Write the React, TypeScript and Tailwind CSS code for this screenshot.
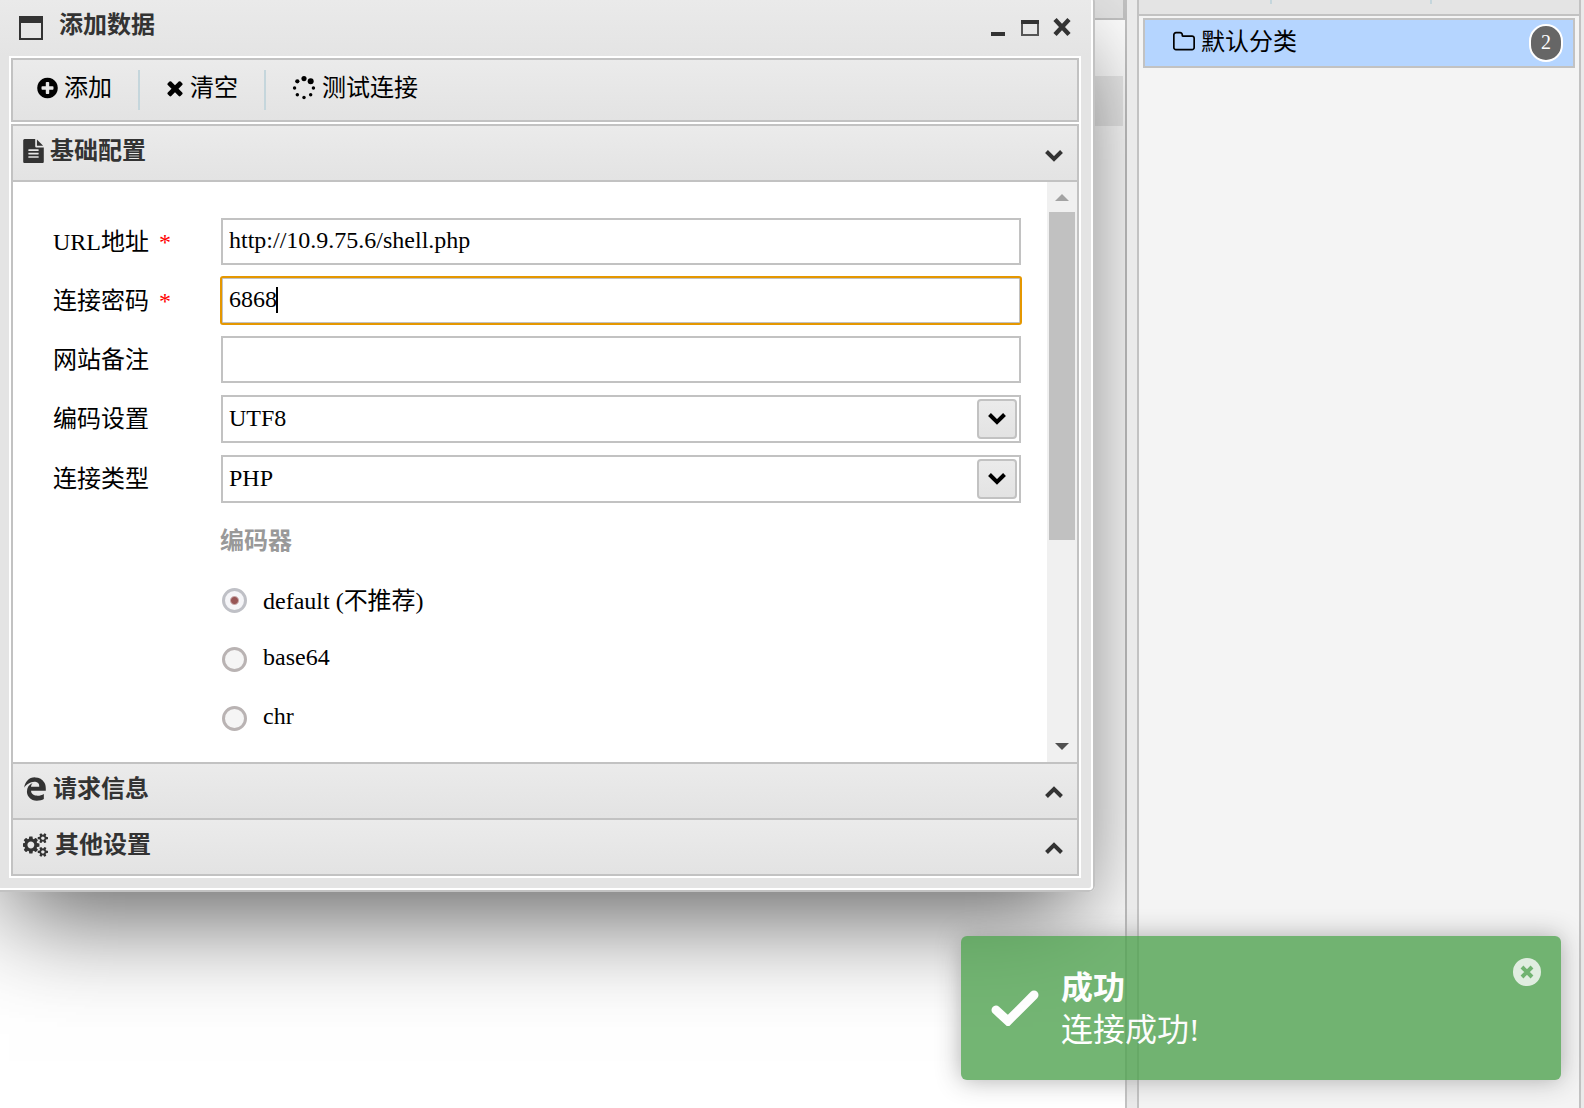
import React, { useState } from "react";
import { FaEdgeLegacy } from "react-icons/fa";

type IconProps = { className?: string };

function PlusCircleIcon({ className }: IconProps) {
  return (
    <svg viewBox="128 0 1536 1792" className={className} fill="currentColor" aria-hidden="true">
      <path d="M1344 960v-128q0-26-19-45t-45-19h-256v-256q0-26-19-45t-45-19h-128q-26 0-45 19t-19 45v256h-256q-26 0-45 19t-19 45v128q0 26 19 45t45 19h256v256q0 26 19 45t45 19h128q26 0 45-19t19-45v-256h256q26 0 45-19t19-45zm320-64q0 209-103 385.5t-279.5 279.5-385.5 103-385.5-103-279.5-279.5-103-385.5 103-385.5 279.5-279.5 385.5-103 385.5 103 279.5 279.5 103 385.5z" />
    </svg>
  );
}

function TimesIcon({ className }: IconProps) {
  return (
    <svg viewBox="192 0 1408 1792" className={className} fill="currentColor" aria-hidden="true">
      <path d="M1490 1322q0 40-28 68l-136 136q-28 28-68 28t-68-28l-294-294-294 294q-28 28-68 28t-68-28l-136-136q-28-28-28-68t28-68l294-294-294-294q-28-28-28-68t28-68l136-136q28-28 68-28t68 28l294 294 294-294q28-28 68-28t68 28l136 136q28 28 28 68t-28 68l-294 294 294 294q28 28 28 68z" />
    </svg>
  );
}

function SpinnerIcon({ className }: IconProps) {
  return (
    <svg viewBox="0 0 1792 1792" className={className} fill="currentColor" aria-hidden="true">
      <circle cx="398" cy="1394" r="128" />
      <circle cx="896" cy="1600" r="128" />
      <circle cx="192" cy="896" r="128" />
      <circle cx="1394" cy="1394" r="128" />
      <circle cx="398" cy="398" r="160" />
      <circle cx="1600" cy="896" r="128" />
      <circle cx="896" cy="192" r="192" />
      <circle cx="1394" cy="398" r="224" />
    </svg>
  );
}

function FileTextIcon({ className }: IconProps) {
  return (
    <svg viewBox="128 0 1536 1792" className={className} fill="currentColor" aria-hidden="true">
      <path d="M1596 476q14 14 28 36h-472v-472q22 14 36 28zm-476 164h544v1056q0 40-28 68t-68 28h-1344q-40 0-68-28t-28-68v-1600q0-40 28-68t68-28h800v544q0 40 28 68t68 28zm160 736v-64q0-14-9-23t-23-9h-704q-14 0-23 9t-9 23v64q0 14 9 23t23 9h704q14 0 23-9t9-23zm0-256v-64q0-14-9-23t-23-9h-704q-14 0-23 9t-9 23v64q0 14 9 23t23 9h704q14 0 23-9t9-23zm0-256v-64q0-14-9-23t-23-9h-704q-14 0-23 9t-9 23v64q0 14 9 23t23 9h704q14 0 23-9t9-23z" />
    </svg>
  );
}

function CogsIcon({ className }: IconProps) {
  return (
    <svg viewBox="0 0 1920 1792" className={className} fill="currentColor" aria-hidden="true">
      <path d="M832 896q0-106-75-181t-181-75-181 75-75 181 75 181 181 75 181-75 75-181zm768 512q0-52-38-90t-90-38-90 38-38 90q0 53 37.5 90.5t90.5 37.5 90.5-37.5 37.5-90.5zm0-1024q0-52-38-90t-90-38-90 38-38 90q0 53 37.5 90.5t90.5 37.5 90.5-37.5 37.5-90.5zm-384 421v185q0 10-7 19.5t-16 10.5l-155 24q-11 35-32 76 34 48 90 115 7 11 7 20 0 12-7 19-23 30-82.5 89.5t-78.5 59.5q-11 0-21-7l-115-90q-37 19-77 31-11 108-23 155-7 24-30 24h-186q-11 0-20-7.5t-10-17.5l-23-153q-34-10-75-31l-118 89q-7 7-20 7-11 0-21-8-144-133-144-160 0-9 7-19 10-14 41-53t47-61q-23-44-35-82l-152-24q-10-1-17-9.5t-7-19.5v-185q0-10 7-19.5t16-10.5l155-24q11-35 32-76-34-48-90-115-7-11-7-20 0-12 7-20 22-30 82-89t79-59q11 0 21 7l115 90q34-18 77-32 11-108 23-154 7-24 30-24h186q11 0 20 7.5t10 17.5l23 153q34 10 75 31l118-89q8-7 20-7 11 0 21 8 144 133 144 160 0 9-7 19-12 16-42 54t-45 60q23 48 34 82l152 23q10 2 17 10.5t7 19.5zm640 533v140q0 16-149 31-12 27-30 52 51 113 51 138 0 4-4 7-122 71-124 71-8 0-46-47t-52-68q-20 2-30 2t-30-2q-14 21-52 68t-46 47q-2 0-124-71-4-3-4-7 0-25 51-138-18-25-30-52-149-15-149-31v-140q0-16 149-31 13-29 30-52-51-113-51-138 0-4 4-7 4-2 35-20t59-34 30-16q8 0 46 46.5t52 67.5q20-2 30-2t30 2q51-71 92-112l6-2q4 0 124 70 4 3 4 7 0 25-51 138 17 23 30 52 149 15 149 31zm0-1024v140q0 16-149 31-12 27-30 52 51 113 51 138 0 4-4 7-122 71-124 71-8 0-46-47t-52-68q-20 2-30 2t-30-2q-14 21-52 68t-46 47q-2 0-124-71-4-3-4-7 0-25 51-138-18-25-30-52-149-15-149-31v-140q0-16 149-31 13-29 30-52-51-113-51-138 0-4 4-7 4-2 35-20t59-34 30-16q8 0 46 46.5t52 67.5q20-2 30-2t30 2q51-71 92-112l6-2q4 0 124 70 4 3 4 7 0 25-51 138 17 23 30 52 149 15 149 31z" />
    </svg>
  );
}

function FolderIcon({ className }: IconProps) {
  return (
    <svg viewBox="64 0 1664 1792" className={className} fill="currentColor" aria-hidden="true">
      <path d="M1600 1312v-704q0-40-28-68t-68-28h-704q-40 0-68-28t-28-68v-64q0-40-28-68t-68-28h-320q-40 0-68 28t-28 68v960q0 40 28 68t68 28h1216q40 0 68-28t28-68zm128-704v704q0 92-66 158t-158 66h-1216q-92 0-158-66t-66-158v-960q0-92 66-158t158-66h320q92 0 158 66t66 158v32h672q92 0 158 66t66 158z" />
    </svg>
  );
}

function Chevron({ up, className }: { up?: boolean; className?: string }) {
  return (
    <svg viewBox="0 0 18 12" width="18" height="12" fill="none" stroke="currentColor" strokeWidth="4" className={className} aria-hidden="true">
      <path d={up ? "M1.5 10.5 9 3l7.5 7.5" : "M1.5 1.5 9 9l7.5-7.5"} />
    </svg>
  );
}

function ToolbarSeparator() {
  return <span className="mx-0.5 h-10 w-0.5 bg-[#c5d6dc]" />;
}

function ToolButton({ icon, label }: { icon: React.ReactNode; label: string }) {
  return (
    <button type="button" className="flex h-10 items-center gap-1.5 px-6 pb-1 text-black">
      {icon}
      {label}
    </button>
  );
}

function SectionHeader({ icon, label, open }: { icon: React.ReactNode; label: string; open?: boolean }) {
  return (
    <button
      type="button"
      aria-expanded={!!open}
      className="flex h-14 w-full items-center justify-between bg-linear-to-b from-[#ebebeb] to-[#e3e3e3] pr-3.5 pl-2.5 text-[#333] last:h-[54px]"
    >
      <span className="flex items-center gap-1.5 pb-1 font-bold">
        {icon}
        {label}
      </span>
      <Chevron up={!open} className={open ? "mt-1.5" : "mt-0.5"} />
    </button>
  );
}

function Field({ id, label, required, children }: { id: string; label: string; required?: boolean; children: React.ReactNode }) {
  return (
    <div className="flex items-center">
      <label htmlFor={id} className="flex w-[168px] shrink-0 gap-2.5">
        {label}
        {required && <span className="text-[#ff0000]">*</span>}
      </label>
      <div className="relative flex-1">{children}</div>
    </div>
  );
}

function SelectField({ id, value }: { id: string; value: string }) {
  return (
    <>
      <select
        id={id}
        defaultValue={value}
        className="block h-12 w-full appearance-none border-2 border-[#c2c2c2] bg-white px-1.5 pb-0.5 outline-none"
      >
        <option>{value}</option>
      </select>
      <span className="pointer-events-none absolute top-1 right-1 flex size-10 items-center justify-center rounded border-2 border-[#c2c2c2] bg-linear-to-b from-[#ebebeb] to-[#e3e3e3]">
        <Chevron className="text-black" />
      </span>
    </>
  );
}

const inputClass = "block h-[47px] w-full border-2 border-[#c2c2c2] bg-white px-1.5 pb-0.5 outline-none";
const radioClass =
  "size-[25px] shrink-0 appearance-none rounded-full border-3 border-[#b9b3b3] bg-[#f5f5f5] checked:border-[#bfc0c6] checked:bg-[radial-gradient(circle,#985656_0_3px,#f5f5f8_5px)]";

function ConfigForm() {
  const [url, setUrl] = useState("http://10.9.75.6/shell.php");
  const [password, setPassword] = useState("6868");
  return (
    <form className="flex flex-1 flex-col gap-3 pt-9 pr-[26px] pl-10">
      <Field id="url" label="URL地址" required>
        <input id="url" value={url} onChange={(e) => setUrl(e.target.value)} className={inputClass} />
      </Field>
      <Field id="password" label="连接密码" required>
        <input
          id="password"
          value={password}
          onChange={(e) => setPassword(e.target.value)}
          className="block h-[47px] w-full rounded-xs border-2 border-[#c2c2c2] bg-white px-1.5 pb-0.5 outline-2 -outline-offset-1 outline-[#e59700]"
        />
        <span className="absolute top-2.5 left-[55px] h-[26px] w-0.5 bg-black" />
      </Field>
      <Field id="note" label="网站备注">
        <input id="note" className={inputClass} />
      </Field>
      <Field id="charset" label="编码设置">
        <SelectField id="charset" value="UTF8" />
      </Field>
      <Field id="type" label="连接类型">
        <SelectField id="type" value="PHP" />
      </Field>
      <fieldset className="mt-2 ml-[167px]">
        <legend className="font-bold text-[#999]">编码器</legend>
        <div className="mt-3 flex flex-col pl-0.5">
          {["default (不推荐)", "base64", "chr"].map((name, i) => (
            <label key={name} className="flex h-[59px] items-center gap-4 leading-[normal]">
              <input type="radio" name="encoder" defaultChecked={i === 0} className={radioClass} />
              <span className="pb-1">{name}</span>
            </label>
          ))}
        </div>
      </fieldset>
    </form>
  );
}

function ScrollBar() {
  return (
    <div className="flex w-[30px] flex-col items-center justify-between bg-[#f0f0f0] pt-3 pb-3" aria-hidden="true">
      <div className="flex flex-col items-center gap-[11px]">
        <svg width="14" height="7" viewBox="0 0 14 7">
          <path d="M0 7 7 0l7 7z" fill="#a3a3a3" />
        </svg>
        <div className="h-[328px] w-[26px] bg-[#c1c1c1]" />
      </div>
      <svg width="14" height="7" viewBox="0 0 14 7">
        <path d="M0 0h14L7 7z" fill="#505050" />
      </svg>
    </div>
  );
}

function DataDialog() {
  return (
    <div
      role="dialog"
      aria-label="添加数据"
      className="absolute -top-1 -left-[5px] w-[1100px] rounded-md border-2 border-[#c2c2c2] shadow-[0_40px_96px_-14px_rgba(0,0,0,0.62)]"
    >
      <div className="rounded-sm border-2 border-white bg-[#e4e4e4] px-2.5 pb-2.5">
        <header className="-mx-2.5 flex h-14 items-center bg-linear-to-b from-[#eaeaea] to-[#e4e4e4] pr-5 pl-5 text-[#333]">
          <svg width="24" height="24" viewBox="0 0 24 24" aria-hidden="true">
            <path d="M1 7v16h22V7" fill="none" stroke="#333" strokeWidth="2" />
            <path d="M0 0h24v7H0z" fill="#333" />
          </svg>
          <h1 className="flex-1 pb-1.5 pl-4 font-bold">添加数据</h1>
          <div className="flex gap-3.5 pb-0.5">
            <button type="button" aria-label="最小化">
              <svg width="18" height="18" viewBox="0 0 18 18">
                <path d="M2 14h14v4H2z" fill="#333" />
              </svg>
            </button>
            <button type="button" aria-label="最大化">
              <svg width="18" height="18" viewBox="0 0 18 18">
                <path d="M1 4v13h16V4" fill="none" stroke="#555" strokeWidth="2" />
                <path d="M0 2h18v4H0z" fill="#333" />
              </svg>
            </button>
            <button type="button" aria-label="关闭">
              <svg width="18" height="18" viewBox="0 0 18 18">
                <path d="m2 1.5 14 15M16 1.5l-14 15" stroke="#333" strokeWidth="4.4" />
              </svg>
            </button>
          </div>
        </header>
        <div className="flex flex-col gap-0.5 bg-white p-0.5">
          <div className="flex items-center border-2 border-[#c2c2c2] bg-linear-to-b from-[#ebebeb] to-[#e3e3e3] py-2.5">
            <ToolButton icon={<PlusCircleIcon className="h-6 w-[21px]" />} label="添加" />
            <ToolbarSeparator />
            <ToolButton icon={<TimesIcon className="h-6 w-[18px]" />} label="清空" />
            <ToolbarSeparator />
            <ToolButton icon={<SpinnerIcon className="size-6" />} label="测试连接" />
          </div>
          <div className="divide-y-2 divide-[#c2c2c2] border-2 border-[#c2c2c2]">
            <SectionHeader icon={<FileTextIcon className="h-6 w-[21px]" />} label="基础配置" open />
            <div className="flex h-[582px] overflow-hidden bg-white">
              <ConfigForm />
              <ScrollBar />
            </div>
            <SectionHeader icon={<FaEdgeLegacy className="size-6" />} label="请求信息" />
            <SectionHeader icon={<CogsIcon className="h-6 w-[26px]" />} label="其他设置" />
          </div>
        </div>
      </div>
    </div>
  );
}

function Sidebar() {
  return (
    <aside className="flex w-[444px] shrink-0 flex-col border-x-2 border-[#c2c2c2] bg-[#f4f4f4]">
      <div className="flex h-4 items-start border-b-2 border-[#c2c2c2] bg-[#e4e4e4]">
        <span className="ml-[131px] h-1 w-0.5 bg-[#c5d6dc]" />
        <span className="ml-[158px] h-1 w-0.5 bg-[#c5d6dc]" />
      </div>
      <a
        href="#default"
        className="mx-1 mt-0.5 flex h-[50px] items-center border-2 border-[#c2c2c2] bg-[#b5d5ff] pr-2.5 pl-7 text-black"
      >
        <span className="flex flex-1 items-center gap-1.5 pb-0.5">
          <FolderIcon className="h-6 w-[22px]" />
          默认分类
        </span>
        <span className="flex h-[38px] w-[34px] items-center justify-center rounded-full border-2 border-white bg-[#666] pb-0.5 text-xl leading-none text-white">
          2
        </span>
      </a>
    </aside>
  );
}

function Toast() {
  return (
    <div
      role="status"
      className="absolute right-[23px] bottom-7 flex h-36 w-[600px] items-center rounded-md bg-[#51a351] px-[30px] text-[32px] leading-[42px] text-white opacity-80 shadow-[0_0_24px_#999]"
    >
      <svg width="48" height="36" viewBox="0 0 48 36" fill="none" stroke="#fff" strokeWidth="9" strokeLinecap="round" aria-hidden="true">
        <path d="m5 20 12 11L43 5" />
      </svg>
      <div className="pt-0.5 pl-[22px]">
        <h2 className="font-bold">成功</h2>
        <p>连接成功!</p>
      </div>
      <button type="button" aria-label="关闭通知" className="absolute top-[22px] right-5 opacity-80">
        <svg width="28" height="28" viewBox="0 0 28 28">
          <circle cx="14" cy="14" r="14" fill="#fff" />
          <path d="m9 9 10 10M19 9 9 19" stroke="#51a351" strokeWidth="4" />
        </svg>
      </button>
    </div>
  );
}

export default function App() {
  return (
    <div className="relative flex h-screen overflow-hidden bg-[#eaeaea] pr-[3px] font-['Liberation_Serif','Noto_Sans_CJK_SC',serif] text-2xl leading-9 text-black">
      <main className="relative flex-1 overflow-hidden">
        <div className="h-full border-r-2 border-[#c2c2c2] bg-white">
          <div className="h-5 border-r-2 border-b-2 border-[#c2c2c2] bg-[#e4e4e4]" />
          <div className="mt-14 mr-0.5 h-[50px] bg-[#ebebeb]" />
        </div>
        <DataDialog />
      </main>
      <div className="w-2.5 shrink-0" />
      <Sidebar />
      <Toast />
    </div>
  );
}
